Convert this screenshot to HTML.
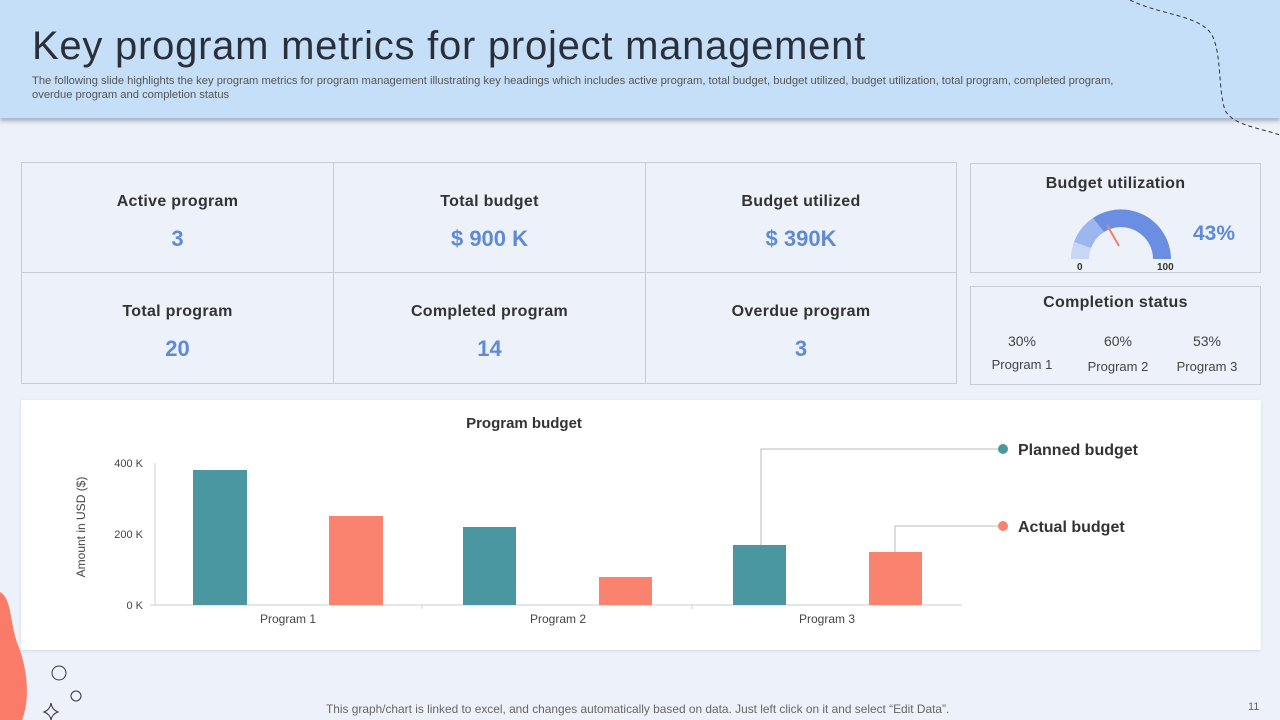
<!DOCTYPE html>
<html><head><meta charset="utf-8"><style>
*{margin:0;padding:0;box-sizing:border-box}
body{width:1280px;height:720px;overflow:hidden;background:#edf1f9;font-family:"Liberation Sans",sans-serif;position:relative;color:#333}
.hdr{position:absolute;left:0;top:0;width:1280px;height:118px;background:#c5dff8;box-shadow:0 3px 4px rgba(90,110,140,.5)}
h1{position:absolute;left:32px;top:24px;font-size:40px;font-weight:normal;color:#2b2f3a;letter-spacing:.75px}
.sub{position:absolute;left:32px;top:74px;width:1200px;font-size:11.2px;line-height:14px;color:#555}
.grid{position:absolute;left:21px;top:162px;width:936px;height:222px;border:1px solid #c8ccd4}
.cell{position:absolute;width:312px;height:110px;text-align:center;border-color:#c8ccd4}
.cell .t{position:absolute;top:30px;width:100%;font-size:16px;color:#333;font-weight:bold;letter-spacing:.3px}
.cell .v{position:absolute;top:63px;width:100%;font-size:22px;font-weight:bold;color:#5f8ad6}
.box{position:absolute;border:1px solid #c8ccd4}
.btitle{position:absolute;width:100%;text-align:center;font-size:16px;color:#333;font-weight:bold;letter-spacing:.3px}
.chart{position:absolute;left:21px;top:400px;width:1240px;height:250px;background:#fff;box-shadow:0 1px 3px rgba(0,0,0,.1)}
.foot{position:absolute;left:326px;top:702px;font-size:11.9px;color:#666}
</style></head><body>
<div class="hdr"></div>
<svg style="position:absolute;left:0;top:0" width="1280" height="140"><path d="M1130 0 C1160 15,1200 15,1212 35 C1222 55,1218 90,1225 110 C1232 125,1260 128,1280 135" fill="none" stroke="#334" stroke-width="1" stroke-dasharray="4 3"/></svg>
<h1>Key program metrics for project management</h1>
<div class="sub">The following slide highlights the key program metrics for program management illustrating key headings which includes active program, total budget, budget utilized, budget utilization, total program, completed program,<br>overdue program and completion status</div>
<div class="grid">
<div class="cell" style="left:0;top:0;border-right:1px solid #c8ccd4;border-bottom:1px solid #c8ccd4"><div class="t">Active program</div><div class="v">3</div></div>
<div class="cell" style="left:312px;top:0;border-right:1px solid #c8ccd4;border-bottom:1px solid #c8ccd4"><div class="t">Total budget</div><div class="v">$ 900 K</div></div>
<div class="cell" style="left:623px;top:0;border-bottom:1px solid #c8ccd4"><div class="t">Budget utilized</div><div class="v">$ 390K</div></div>
<div class="cell" style="left:0;top:110px;border-right:1px solid #c8ccd4"><div class="t">Total program</div><div class="v">20</div></div>
<div class="cell" style="left:312px;top:110px;border-right:1px solid #c8ccd4"><div class="t">Completed program</div><div class="v">14</div></div>
<div class="cell" style="left:623px;top:110px"><div class="t">Overdue program</div><div class="v">3</div></div>
</div>
<div class="box" style="left:970px;top:163px;width:291px;height:110px">
<div class="btitle" style="top:11px">Budget utilization</div>
<svg style="position:absolute;left:0;top:0" width="291" height="110">
<path d="M100 95 A50 50 0 0 1 103 78 L120 84 A32 32 0 0 0 118 95Z" fill="#c8d6f5"/>
<path d="M103 78 A50 50 0 0 1 122 54 L133 68 A32 32 0 0 0 120 84Z" fill="#9db6ee"/>
<path d="M122 54 A50 50 0 0 1 200 95 L182 95 A32 32 0 0 0 133 68Z" fill="#6a8fe2"/>
<line x1="136" y1="61" x2="148" y2="82" stroke="#f08070" stroke-width="2"/>
<text x="106" y="106" font-size="10" font-weight="bold" font-family="Liberation Sans" fill="#333">0</text>
<text x="186" y="106" font-size="10" font-weight="bold" font-family="Liberation Sans" fill="#333">100</text>
<text x="222" y="76" font-size="21" font-weight="bold" font-family="Liberation Sans" fill="#5f8ad6">43%</text>
</svg></div>
<div class="box" style="left:970px;top:286px;width:291px;height:99px">
<div class="btitle" style="top:7px">Completion status</div>
<div style="position:absolute;left:20px;top:46px;font-size:14px;color:#444;width:62px;text-align:center">30%</div>
<div style="position:absolute;left:20px;top:70px;font-size:13px;color:#444;width:62px;text-align:center">Program 1</div>
<div style="position:absolute;left:116px;top:46px;font-size:14px;color:#444;width:62px;text-align:center">60%</div>
<div style="position:absolute;left:114px;top:72px;font-size:13px;color:#444;width:66px;text-align:center">Program 2</div>
<div style="position:absolute;left:205px;top:46px;font-size:14px;color:#444;width:62px;text-align:center">53%</div>
<div style="position:absolute;left:203px;top:72px;font-size:13px;color:#444;width:66px;text-align:center">Program 3</div>
</div>
<div class="chart"></div>
<svg style="position:absolute;left:0;top:0" width="1280" height="720" font-family="Liberation Sans">
<text x="524" y="428" font-size="15" font-weight="bold" fill="#333" text-anchor="middle">Program budget</text>
<line x1="155" y1="463" x2="155" y2="605" stroke="#ccc"/>
<line x1="150" y1="605" x2="962" y2="605" stroke="#ccc"/>
<line x1="422" y1="605" x2="422" y2="609" stroke="#ccc"/><line x1="692" y1="605" x2="692" y2="609" stroke="#ccc"/>
<text x="143" y="467" font-size="11" fill="#444" text-anchor="end">400 K</text>
<text x="143" y="538" font-size="11" fill="#444" text-anchor="end">200 K</text>
<text x="143" y="609" font-size="11" fill="#444" text-anchor="end">0 K</text>
<text transform="translate(85,527) rotate(-90)" font-size="12" fill="#444" text-anchor="middle">Amount in USD ($)</text>
<rect x="193" y="470" width="54" height="135" fill="#4a96a1"/>
<rect x="329" y="516" width="54" height="89" fill="#fa8370"/>
<rect x="463" y="527" width="53" height="78" fill="#4a96a1"/>
<rect x="599" y="577" width="53" height="28" fill="#fa8370"/>
<rect x="733" y="545" width="53" height="60" fill="#4a96a1"/>
<rect x="869" y="552" width="53" height="53" fill="#fa8370"/>
<text x="288" y="623" font-size="12" fill="#444" text-anchor="middle">Program 1</text>
<text x="558" y="623" font-size="12" fill="#444" text-anchor="middle">Program  2</text>
<text x="827" y="623" font-size="12" fill="#444" text-anchor="middle">Program 3</text>
<polyline points="761,545 761,449 1003,449" fill="none" stroke="#bbb"/>
<polyline points="895,552 895,526 1003,526" fill="none" stroke="#bbb"/>
<circle cx="1003" cy="449" r="5" fill="#4a96a1"/><circle cx="1003" cy="526" r="5" fill="#fa8370"/>
<text x="1018" y="455" font-size="16" font-weight="bold" fill="#333">Planned budget</text>
<text x="1018" y="532" font-size="16" font-weight="bold" fill="#333">Actual budget</text>
<path d="M0 592 C12 598,10 625,18 645 C28 670,30 700,22 720 L0 720Z" fill="#fa7c68"/>
<circle cx="59" cy="673" r="7" fill="none" stroke="#334" stroke-width="1"/>
<circle cx="76" cy="696" r="5" fill="none" stroke="#334" stroke-width="1"/>
<path d="M51 703 Q52 710 58 712 Q52 714 51 720 Q50 714 44 712 Q50 710 51 703Z" fill="none" stroke="#334" stroke-width="1"/>
<text x="1248" y="710" font-size="11" fill="#666">11</text>
</svg>
<div class="foot">This graph/chart is linked to excel, and changes automatically based on data. Just left click on it and select “Edit Data”.</div>
</body></html>
